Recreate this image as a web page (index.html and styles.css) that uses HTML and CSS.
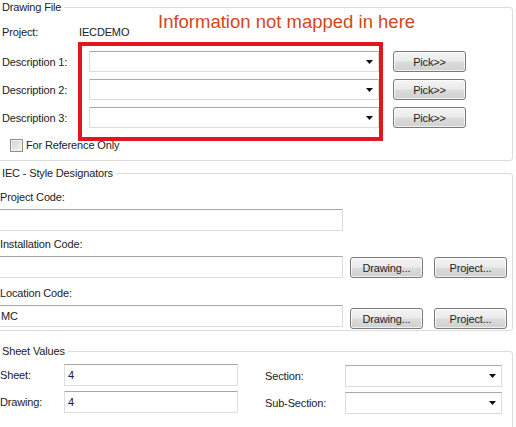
FILE: index.html
```html
<!DOCTYPE html>
<html>
<head>
<meta charset="utf-8">
<title>Drawing Properties</title>
<link rel="stylesheet" href="styles.css">
</head>
<body>
<div class="page">
  <fieldset class="group group-drawing">
    <legend>Drawing File</legend>
    <div class="drawing-body">
      <div class="row row-project">
        <span class="label label-project">Project:</span>
        <span class="value">IECDEMO</span>
      </div>
      <div class="row row-desc">
        <span class="label label-desc">Description 1:</span>
        <div class="combo combo-desc"><svg class="arrow" width="7" height="4" viewBox="0 0 7 4"><polygon points="0,0 7,0 3.5,4" fill="#111"/></svg></div>
        <button class="btn btn-pick">Pick&gt;&gt;</button>
      </div>
      <div class="row row-desc">
        <span class="label label-desc">Description 2:</span>
        <div class="combo combo-desc"><svg class="arrow" width="7" height="4" viewBox="0 0 7 4"><polygon points="0,0 7,0 3.5,4" fill="#111"/></svg></div>
        <button class="btn btn-pick">Pick&gt;&gt;</button>
      </div>
      <div class="row row-desc">
        <span class="label label-desc">Description 3:</span>
        <div class="combo combo-desc"><svg class="arrow" width="7" height="4" viewBox="0 0 7 4"><polygon points="0,0 7,0 3.5,4" fill="#111"/></svg></div>
        <button class="btn btn-pick">Pick&gt;&gt;</button>
      </div>
      <div class="row row-check">
        <span class="checkbox"></span>
        <span class="label">For Reference Only</span>
      </div>
    </div>
  </fieldset>

  <fieldset class="group group-iec">
    <legend>IEC - Style Designators</legend>
    <div class="iec-body">
      <span class="label label-code lc-1">Project Code:</span>
      <div class="code-row">
        <div class="textbox textbox-code"></div>
      </div>
      <span class="label label-code lc-2">Installation Code:</span>
      <div class="code-row">
        <div class="textbox textbox-code"></div>
        <button class="btn btn-code btn-off1">Drawing...</button>
        <button class="btn btn-code btn-off1">Project...</button>
      </div>
      <span class="label label-code lc-3">Location Code:</span>
      <div class="code-row">
        <div class="textbox textbox-code">MC</div>
        <button class="btn btn-code btn-off3">Drawing...</button>
        <button class="btn btn-code btn-off3">Project...</button>
      </div>
    </div>
  </fieldset>

  <fieldset class="group group-sheet">
    <legend>Sheet Values</legend>
    <div class="sheet-grid">
      <span class="label">Sheet:</span>
      <div class="textbox textbox-sheet">4</div>
      <span class="label label-section">Section:</span>
      <div class="combo combo-section"><svg class="arrow" width="7" height="4" viewBox="0 0 7 4"><polygon points="0,0 7,0 3.5,4" fill="#111"/></svg></div>

      <span class="label">Drawing:</span>
      <div class="textbox textbox-sheet">4</div>
      <span class="label label-section">Sub-Section:</span>
      <div class="combo combo-section"><svg class="arrow" width="7" height="4" viewBox="0 0 7 4"><polygon points="0,0 7,0 3.5,4" fill="#111"/></svg></div>
    </div>
  </fieldset>

  <div class="note-text">Information not mapped in here</div>
  <div class="note-box"></div>
</div>
</body>
</html>
```

FILE: styles.css
```css
html, body {
  margin: 0;
  padding: 0;
  background: #ffffff;
}

body {
  width: 516px;
  height: 427px;
  overflow: hidden;
  font-family: "Liberation Sans", Arial, sans-serif;
  font-size: 11px;
  letter-spacing: -0.15px;
  color: #222222;
}

.page {
  position: relative;
  width: 516px;
  height: 427px;
  overflow: hidden;
  display: flex;
  flex-direction: column;
}

/* ---------- group boxes ---------- */
.group {
  margin: 0 0 0 -10px;
  padding: 0 0 0 9px;
  width: 523px;
  box-sizing: border-box;
  border: 1px solid #d9dcdf;
  border-radius: 3px;
  min-width: 0;
  flex: none;
}

.group legend {
  padding: 0 3px;
  margin-left: -1px;
  line-height: 14px;
  height: 14px;
  color: #222222;
}

.group-drawing {
  height: 161px;
}

.group-iec {
  margin-top: 5px;
  height: 165px;
}

.group-sheet {
  margin-top: 13px;
  height: 86px;
}

.label {
  line-height: 14px;
  white-space: nowrap;
}

/* ---------- drawing file ---------- */
.drawing-body {
  padding-left: 2px;
  display: flex;
  flex-direction: column;
}

.row {
  display: flex;
  align-items: center;
}

.row-project {
  margin-top: 8px;
  height: 20px;
}

.label-project {
  width: 77px;
}

.row-desc {
  height: 21px;
  margin-top: 7px;
}

.row-project + .row-desc {
  margin-top: 9px;
}

.label-desc {
  width: 87px;
  flex: none;
}

.combo {
  height: 21px;
  box-sizing: border-box;
  border: 1px solid #dcdcdc;
  border-top-color: #a9a9a9;
  background: #ffffff;
  display: flex;
  align-items: center;
  justify-content: flex-end;
  padding-right: 5px;
  flex: none;
}

.combo-desc {
  width: 290px;
}

.arrow {
  display: block;
}

.btn {
  font-family: "Liberation Sans", Arial, sans-serif;
  font-size: 11px;
  letter-spacing: -0.15px;
  color: #1e1e1e;
  height: 21px;
  width: 73px;
  box-sizing: border-box;
  border: 1px solid #7a7a7a;
  border-radius: 3px;
  padding: 0;
  background: linear-gradient(to bottom, #f4f4f4 0%, #ebebeb 48%, #dcdcdc 52%, #d0d0d0 100%);
  box-shadow: inset 0 0 0 1px rgba(255, 255, 255, 0.7);
  flex: none;
}

.btn-pick {
  margin-left: 14px;
}

.row-check {
  margin-top: 10px;
  height: 14px;
  padding-left: 8px;
}

.checkbox {
  width: 13px;
  height: 13px;
  box-sizing: border-box;
  border: 1px solid #8e8f8f;
  background: linear-gradient(135deg, #cfcfcf 0%, #e6e6e6 55%, #f6f6f6 100%);
  box-shadow: inset 0 0 0 1px #f2f2f2;
  margin-right: 3px;
  flex: none;
}

/* ---------- IEC designators ---------- */
.iec-body {
  display: flex;
  flex-direction: column;
}

.label-code {
  display: block;
  height: 14px;
}

.lc-1 {
  margin-top: 10px;
}

.lc-2 {
  margin-top: 6px;
}

.lc-3 {
  margin-top: 8px;
}

.code-row {
  margin-top: 5px;
  display: flex;
  align-items: flex-start;
  height: 22px;
}

.textbox {
  height: 22px;
  box-sizing: border-box;
  border: 1px solid #dedede;
  border-top-color: #a6a6a6;
  background: #ffffff;
  line-height: 20px;
  padding-left: 3px;
  flex: none;
}

.textbox-code {
  margin-left: -3px;
  width: 346px;
}

.btn-code {
  margin-left: 7px;
}

.btn-code + .btn-code {
  margin-left: 11px;
}

.btn-off1 {
  margin-top: 1px;
}

.btn-off3 {
  margin-top: 3px;
}

/* ---------- sheet values ---------- */
.sheet-grid {
  margin-top: 6px;
  display: grid;
  grid-template-columns: 64px 174px 107px 157px;
  grid-auto-rows: 22px;
  row-gap: 5px;
  column-gap: 0;
  align-items: center;
}

.textbox-sheet {
  width: 174px;
}

.label-section {
  padding-left: 27px;
  margin-top: 1px;
}

.combo-section {
  width: 157px;
  height: 22px;
  margin-top: 2px;
}

/* ---------- annotation overlay ---------- */
.note-text {
  position: absolute;
  left: 158px;
  top: 11px;
  font-size: 18.5px;
  letter-spacing: 0;
  line-height: 22px;
  color: #d5461f;
  white-space: nowrap;
}

.note-box {
  position: absolute;
  left: 78px;
  top: 42px;
  width: 305px;
  height: 99px;
  box-sizing: border-box;
  border: 4px solid #e2161c;
}
```
